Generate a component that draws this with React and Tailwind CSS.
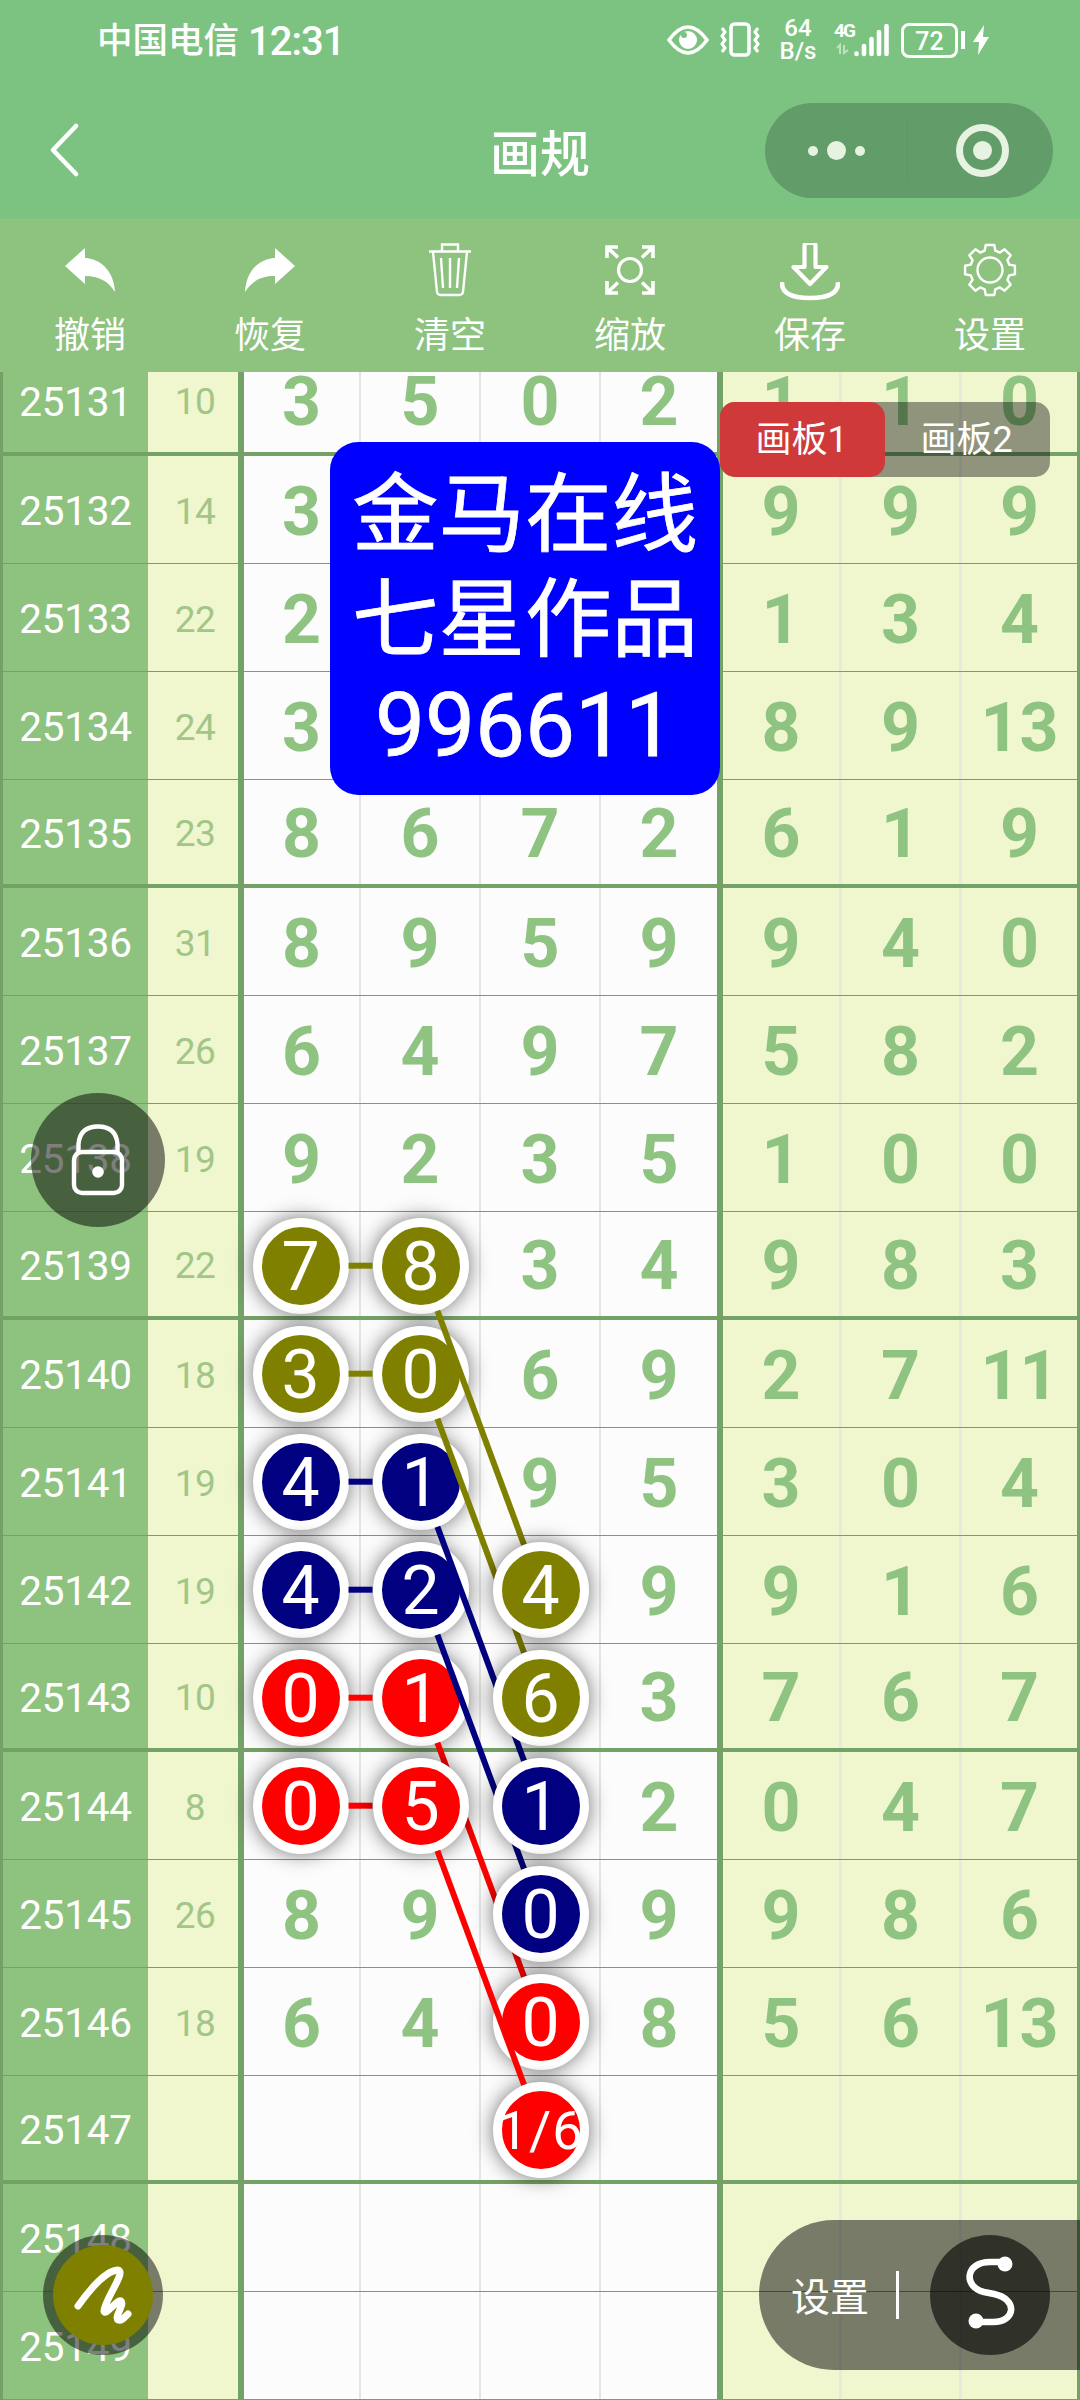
import React from "react";

const ROWS = [
  ["25131", "10", "3", "5", "0", "2", "1", "1", "0"],
  ["25132", "14", "3", "", "", "", "9", "9", "9"],
  ["25133", "22", "2", "", "", "", "1", "3", "4"],
  ["25134", "24", "3", "", "", "", "8", "9", "13"],
  ["25135", "23", "8", "6", "7", "2", "6", "1", "9"],
  ["25136", "31", "8", "9", "5", "9", "9", "4", "0"],
  ["25137", "26", "6", "4", "9", "7", "5", "8", "2"],
  ["25138", "19", "9", "2", "3", "5", "1", "0", "0"],
  ["25139", "22", "", "", "3", "4", "9", "8", "3"],
  ["25140", "18", "", "", "6", "9", "2", "7", "11"],
  ["25141", "19", "", "", "9", "5", "3", "0", "4"],
  ["25142", "19", "", "", "", "9", "9", "1", "6"],
  ["25143", "10", "", "", "", "3", "7", "6", "7"],
  ["25144", "8", "", "", "", "2", "0", "4", "7"],
  ["25145", "26", "8", "9", "", "9", "9", "8", "6"],
  ["25146", "18", "6", "4", "", "8", "5", "6", "13"],
  ["25147", "", "", "", "", "", "", "", ""],
  ["25148", "", "", "", "", "", "", "", ""],
  ["25149", "", "", "", "", "", "", "", ""],
];

const OLIVE = "#808000";
const NAVY = "#000080";
const RED = "#ff0000";

// Canvas coordinates are relative to the board, whose top is 24px into the first row.
const colX = (c) => 300.7 + c * 120;
const rowY = (r) => 29.7 + (r - 25131) * 108;

const BASE_NODES = [
  [0, 25139, "7", OLIVE], [1, 25139, "8", OLIVE],
  [0, 25140, "3", OLIVE], [1, 25140, "0", OLIVE],
  [0, 25141, "4", NAVY], [1, 25141, "1", NAVY],
  [0, 25142, "4", NAVY], [1, 25142, "2", NAVY],
  [0, 25143, "0", RED], [1, 25143, "1", RED],
  [0, 25144, "0", RED],
];
const TOP_NODES = [
  [1, 25144, "5", RED],
  [2, 25142, "4", OLIVE], [2, 25143, "6", OLIVE],
  [2, 25144, "1", NAVY], [2, 25145, "0", NAVY],
  [2, 25146, "0", RED], [2, 25147, "1/6", RED],
];
const PAIRS = [
  [25139, OLIVE], [25140, OLIVE], [25141, NAVY],
  [25142, NAVY], [25143, RED], [25144, RED],
];

function Node({ col, row, text, color }) {
  return (
    <div
      className="absolute flex size-24 -translate-x-1/2 -translate-y-1/2 items-center justify-center rounded-full border-[9px] border-white pt-0.5 shadow-[0_0_20px_rgba(0,0,0,0.55)]"
      style={{ left: colX(col), top: rowY(row), backgroundColor: color }}
    >
      <span
        className={
          text.length > 1
            ? "text-[54px] leading-none tracking-[1px] whitespace-nowrap text-white"
            : "text-[68px] leading-none text-white"
        }
      >
        {text}
      </span>
    </div>
  );
}

function Diagonal({ row, color }) {
  const y = rowY(row);
  return (
    <line x1={437.4} y1={y + 45} x2={524} y2={y + 279} stroke={color} strokeWidth="6" />
  );
}

function Overlay({ children }) {
  return (
    <svg className="absolute inset-0" width="1080" height="2028" viewBox="0 0 1080 2028">
      {children}
    </svg>
  );
}

function Row({ data, index }) {
  const thick = index % 4 === 0;
  return (
    <div
      className={
        "grid h-[108px] shrink-0 grid-cols-[145px_90px_6px_117px_120px_120px_116px_6px_119px_120px_115px] border-[#74a166] font-bold text-[#8ec381] " +
        (thick ? "border-b-4" : "border-b")
      }
    >
      <div className="flex items-center justify-center bg-[#8ec27f] pt-1 text-[40.5px] font-normal tracking-[-0.3px] text-white">
        {data[0]}
      </div>
      <div className="flex items-center justify-center bg-[#f0f7cf] pl-1 pt-1 text-[37px] font-normal tracking-[-0.5px] text-[#a2c688]">
        {data[1]}
      </div>
      <div className="-mb-1 bg-[#74a166]" />
      {data.slice(2, 6).map((n, i) => (
        <div
          key={i}
          className={
            "flex items-center justify-center bg-[#fcfcfc] pt-1 text-[68px] leading-none " +
            (i < 3 ? "border-r-2 border-[#e4e6e2]" : "")
          }
        >
          {n}
        </div>
      ))}
      <div className="-mb-1 bg-[#74a166]" />
      {data.slice(6).map((n, i) => (
        <div
          key={i}
          className={
            "flex items-center justify-center bg-[#f0f7cf] pt-1 text-[68px] leading-none " +
            (i < 2 ? "border-r-[3px] border-[#e6eadb]" : "")
          }
        >
          {n}
        </div>
      ))}
    </div>
  );
}

const UndoIcon = () => (
  <svg width="60" height="60" viewBox="0 0 60 60" fill="#fff">
    <path d="M5 23 25 5v10c17 1 29 14 30 34-7-11-16-16-30-16v8Z" />
  </svg>
);
const RedoIcon = () => (
  <svg width="60" height="60" viewBox="0 0 60 60" fill="#fff">
    <path d="M55 23 35 5v10C18 16 6 29 5 49c7-11 16-16 30-16v8Z" />
  </svg>
);
const TrashIcon = () => (
  <svg width="60" height="60" viewBox="0 0 60 60" fill="none" stroke="#fff" strokeWidth="2.4">
    <path d="M9 8.500H51M22 8V1.500H38V8M13 9l4 40q.3 3 4 3H39q3.700 0 4-3L47 9M21 15l2 30M30 15V45M39 15 37 45" />
  </svg>
);
const ScaleIcon = () => (
  <svg width="60" height="60" viewBox="0 0 60 60" fill="none" stroke="#fff" strokeWidth="3.600">
    <circle cx="30" cy="27" r="11.500" strokeWidth="3.200" />
    <path d="M7 15V4H18M7.500 4.500 18 14.500M42 4H53V15M52.500 4.500 42 14.500M7 38V50H18M7.500 49.500 18 39.500M53 38V50H42M52.500 49.500 42 39.500" />
  </svg>
);
const SaveIcon = () => (
  <svg width="60" height="60" viewBox="0 0 60 60" fill="none" stroke="#fff" strokeLinejoin="round">
    <path d="M24.500 22V1q0-3 3-3h5q3 0 3 3V22H46.500L30 39 13.500 22Z" transform="translate(0 2)" strokeWidth="4.200" />
    <path d="M2 39q-1 16 28 16t28-16" strokeWidth="4.600" />
  </svg>
);

function gearPath() {
  const pts = [];
  for (let i = 0; i < 8; i++) {
    const base = (i * Math.PI) / 4;
    [[-0.27, 20], [-0.17, 25.3], [0.17, 25.3], [0.27, 20]].forEach(([a, r]) => {
      pts.push(`${(30 + r * Math.sin(base + a)).toFixed(2)} ${(27 - r * Math.cos(base + a)).toFixed(2)}`);
    });
  }
  return `M${pts.join("L")}Z`;
}
const GearIcon = () => (
  <svg width="60" height="60" viewBox="0 0 60 60" fill="none" stroke="#fff" strokeWidth="2.4" strokeLinejoin="round">
    <circle cx="30" cy="27" r="12.500" />
    <path d={gearPath()} />
  </svg>
);

const TOOLS = [
  ["撤销", UndoIcon], ["恢复", RedoIcon], ["清空", TrashIcon],
  ["缩放", ScaleIcon], ["保存", SaveIcon], ["设置", GearIcon],
];

function StatusBar() {
  return (
    <div className="flex h-20 items-center pl-[97px] text-white">
      <div className="flex w-[570px] items-center gap-[9px] pt-[3px]">
        <span className="text-[35.5px] font-medium leading-none">中国电信</span>
        <span className="text-[40px] font-medium leading-none tracking-[-1px]">12:31</span>
      </div>
      <svg width="42" height="30" viewBox="0 0 42 30" fill="none" stroke="#fff" strokeWidth="3.600">
        <path d="M2 15Q21-11 40 15 21 41 2 15Z" />
        <circle cx="21" cy="15" r="9" fill="#fff" stroke="none" />
        <circle cx="17" cy="10" r="3" fill="#7cc382" stroke="none" />
      </svg>
      <svg className="ml-2.5" width="42" height="36" viewBox="0 0 42 36" fill="none" stroke="#fff" strokeWidth="3">
        <rect x="12" y="2" width="18" height="31" rx="3.500" strokeWidth="3.600" />
        <path d="M3 6l3 4-3 4 3 4-3 4 3 4-3 4M39 6l-3 4 3 4-3 4 3 4-3 4 3 4" />
      </svg>
      <div className="ml-[16px] flex w-[42px] flex-col items-center text-[24px] font-medium leading-[23px]">
        <span>64</span>
        <span>B/s</span>
      </div>
      <div className="ml-[15px] flex items-end">
        <div className="flex h-[34px] w-5 flex-col text-[19px] font-bold leading-4 tracking-[-2px]">
          4G
          <svg className="mt-1 opacity-50" width="18" height="12" viewBox="0 0 18 12" fill="none" stroke="#fff" strokeWidth="2">
            <path d="M3 5 6 2V11M10 2V10L14 7" />
          </svg>
        </div>
        <svg width="35" height="34" viewBox="0 0 35 34" fill="none" stroke="#fff" strokeWidth="4.600" strokeLinecap="round">
          <path d="M2.500 30.500V31M10 23V31M17.500 16V31M25 9V31M32.500 3V31" />
        </svg>
      </div>
      <div className="ml-3 flex h-[35px] w-[57px] items-center justify-center rounded-lg border-[3px] border-white pt-0.5 text-[25px] font-medium leading-none">
        72
      </div>
      <div className="ml-[3px] h-[18px] w-1 bg-white" />
      <svg className="ml-2" width="16" height="30" viewBox="0 0 16 30" fill="#fff">
        <path d="M11 0 0 17H6L5 30 16 12H10Z" />
      </svg>
    </div>
  );
}

export default function App() {
  return (
    <div className="relative flex h-[2400px] w-[1080px] flex-col overflow-hidden bg-[#7cc382] font-['Roboto','Noto_Sans_CJK_SC',sans-serif]">
      <header className="h-[219px] shrink-0">
        <StatusBar />
        <div className="grid h-[139px] grid-cols-[1fr_200px_1fr] items-center pb-0.5 text-white">
          <svg className="ml-[46px]" width="36" height="60" viewBox="0 0 36 60" fill="none" stroke="#fff" strokeWidth="4.600" strokeLinecap="round" strokeLinejoin="round">
            <path d="M30 7 7 31 30 55" />
          </svg>
          <h1 className="pt-3 text-center text-[50px] font-medium leading-none">画规</h1>
          <div className="mt-1 ml-[125px] flex h-[95px] w-[288px] items-center rounded-full bg-[#629c69]">
            <div className="flex h-16 w-[143px] items-center justify-center gap-[9px] border-r border-[#5d9663]">
              <i className="size-2.5 rounded-full bg-[#e6f3e0]" />
              <i className="size-[19px] rounded-full bg-[#e6f3e0]" />
              <i className="size-2.5 rounded-full bg-[#e6f3e0]" />
            </div>
            <div className="flex flex-1 justify-center pl-1">
              <div className="flex size-[53px] items-center justify-center rounded-full border-[7px] border-[#e6f3e0]">
                <i className="size-[19px] rounded-full bg-[#e6f3e0]" />
              </div>
            </div>
          </div>
        </div>
      </header>

      <nav className="grid h-[153px] shrink-0 grid-cols-6 bg-[#8ec27f] pt-6 text-white">
        {TOOLS.map(([label, Icon]) => (
          <button key={label} className="flex flex-col items-center">
            <Icon />
            <span className="mt-[15px] text-[36px] leading-none">{label}</span>
          </button>
        ))}
      </nav>

      <main className="relative h-[2028px] shrink-0 overflow-hidden">
        <div className="-mt-6 flex flex-col border-x-[3px] border-[#74a166]">
          {ROWS.map((r, i) => (
            <Row key={r[0]} data={r} index={i} />
          ))}
        </div>

        {BASE_NODES.map(([c, r, t, k]) => (
          <Node key={`${c}-${r}`} col={c} row={r} text={t} color={k} />
        ))}
        <Overlay>
          {PAIRS.map(([r, k]) => (
            <line key={r} x1="348.500" y1={rowY(r)} x2="372.500" y2={rowY(r)} stroke={k} strokeWidth="6" />
          ))}
          {PAIRS.slice(0, 5).map(([r, k]) => (
            <Diagonal key={r} row={r} color={k} />
          ))}
        </Overlay>
        {TOP_NODES.map(([c, r, t, k]) => (
          <Node key={`${c}-${r}`} col={c} row={r} text={t} color={k} />
        ))}
        <Overlay>
          <Diagonal row={25144} color={RED} />
        </Overlay>

        <div className="absolute left-[720px] top-[30px] flex h-[75px] w-[330px] rounded-[15px] bg-black/40 text-[36px] leading-none text-white">
          <div className="flex flex-1 items-center justify-center rounded-[15px] bg-[#d0393a] pr-0.5">画板1</div>
          <div className="flex flex-1 items-center justify-center pr-0.5">画板2</div>
        </div>

        <div className="absolute left-[330px] top-[70px] flex h-[353px] w-[390px] flex-col items-center rounded-[28px] bg-[#0000ff] pt-[21px] text-[86.5px] leading-[105px] text-white [-webkit-text-stroke:0.8px_white]">
          <div>金马在线</div>
          <div>七星作品</div>
          <div className="text-[89px]">996611</div>
        </div>

        <div className="absolute left-[31px] top-[721px] flex size-[134px] items-center justify-center rounded-full bg-black/50">
          <svg width="60" height="76" viewBox="0 0 60 76" fill="none" stroke="#fff" strokeWidth="4.400">
            <rect x="6" y="30" width="48" height="41" rx="8" />
            <path d="M10.500 30V22Q12 4.500 30 4.500T49.500 22V30" />
            <circle cx="30" cy="50" r="5.800" fill="#fff" stroke="none" />
          </svg>
        </div>

        <div className="absolute left-[43px] top-[1863px] flex size-[120px] items-center justify-center rounded-full bg-black/50">
          <div className="flex size-[100px] items-center justify-center rounded-full bg-[#808000]">
            <svg width="70" height="70" viewBox="0 0 70 70" fill="none" stroke="#fff" strokeWidth="7" strokeLinecap="round" strokeLinejoin="round">
              <path d="M10 46Q33 14 47 10.500C63 6 36 40 36 51 37 57 49 39 53 41 57 44 46 57 50 60 53 61 55 59 60 54" />
            </svg>
          </div>
        </div>

        <div className="absolute left-[759px] top-[1848px] flex h-[150px] w-[321px] items-center rounded-l-full bg-black/50 text-white">
          <span className="ml-8 pt-1.5 text-[39px] leading-none">设置</span>
          <i className="ml-[27px] h-12 w-[3px] bg-white" />
          <div className="ml-[31px] flex size-[120px] items-center justify-center rounded-full bg-black/60">
            <svg width="60" height="80" viewBox="0 0 60 80" fill="none" stroke="#fff" strokeWidth="6.600">
              <path d="M44 7H30C5 7 3 32 24 37L34 39C58 44 56 67 33 67H16" />
              <circle cx="45" cy="9" r="7.500" fill="#fff" stroke="none" />
              <circle cx="16" cy="66" r="7.500" fill="#fff" stroke="none" />
            </svg>
          </div>
        </div>
      </main>
    </div>
  );
}
